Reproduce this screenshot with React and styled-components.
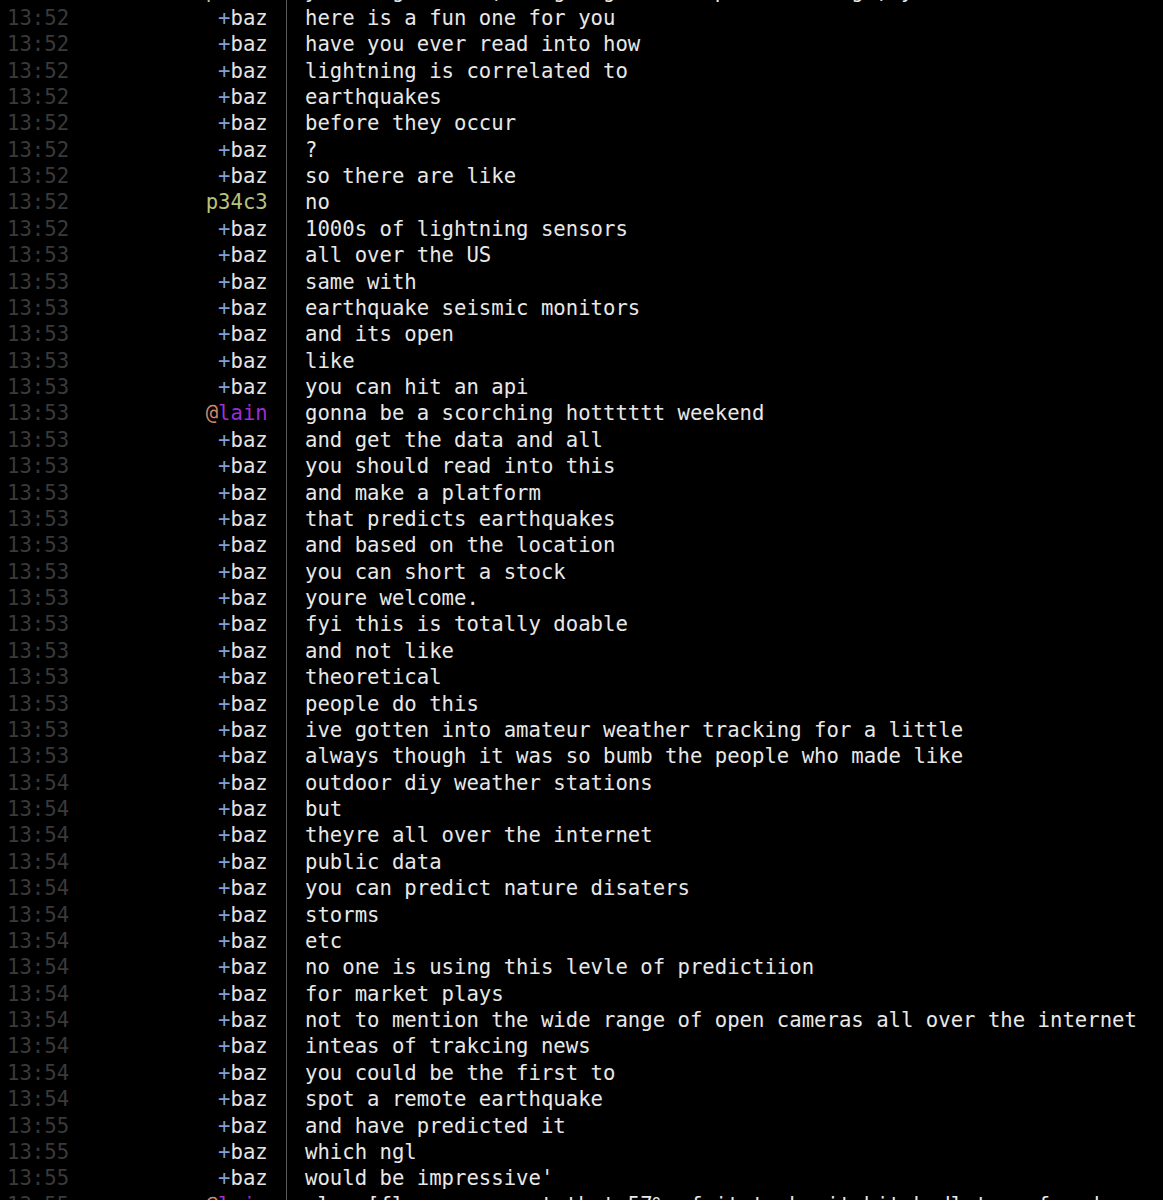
import React from 'react';
import styled, { createGlobalStyle } from 'styled-components';

const GlobalStyle = createGlobalStyle`
  html, body {
    margin: 0;
    padding: 0;
    background: #000;
  }
  body {
    overflow: hidden;
  }
`;

// nick styles: +voice, @op, plain
const NICKS = {
  baz: { prefix: '+', name: 'baz', prefixColor: '#7f9fd6', color: '#e4e4e4' },
  lain: { prefix: '@', name: 'lain', prefixColor: '#d4866e', color: '#9a2fd6' },
  p34c3: { prefix: '', name: 'p34c3', prefixColor: '#b7c27a', color: '#b7c27a' },
};

const LINES = [
  ['13:52', 'p34c3', 'yeah i get that, im going to sleep soon though, you'],
  ['13:52', 'baz', 'here is a fun one for you'],
  ['13:52', 'baz', 'have you ever read into how'],
  ['13:52', 'baz', 'lightning is correlated to'],
  ['13:52', 'baz', 'earthquakes'],
  ['13:52', 'baz', 'before they occur'],
  ['13:52', 'baz', '?'],
  ['13:52', 'baz', 'so there are like'],
  ['13:52', 'p34c3', 'no'],
  ['13:52', 'baz', '1000s of lightning sensors'],
  ['13:53', 'baz', 'all over the US'],
  ['13:53', 'baz', 'same with'],
  ['13:53', 'baz', 'earthquake seismic monitors'],
  ['13:53', 'baz', 'and its open'],
  ['13:53', 'baz', 'like'],
  ['13:53', 'baz', 'you can hit an api'],
  ['13:53', 'lain', 'gonna be a scorching hotttttt weekend'],
  ['13:53', 'baz', 'and get the data and all'],
  ['13:53', 'baz', 'you should read into this'],
  ['13:53', 'baz', 'and make a platform'],
  ['13:53', 'baz', 'that predicts earthquakes'],
  ['13:53', 'baz', 'and based on the location'],
  ['13:53', 'baz', 'you can short a stock'],
  ['13:53', 'baz', 'youre welcome.'],
  ['13:53', 'baz', 'fyi this is totally doable'],
  ['13:53', 'baz', 'and not like'],
  ['13:53', 'baz', 'theoretical'],
  ['13:53', 'baz', 'people do this'],
  ['13:53', 'baz', 'ive gotten into amateur weather tracking for a little'],
  ['13:53', 'baz', 'always though it was so bumb the people who made like'],
  ['13:54', 'baz', 'outdoor diy weather stations'],
  ['13:54', 'baz', 'but'],
  ['13:54', 'baz', 'theyre all over the internet'],
  ['13:54', 'baz', 'public data'],
  ['13:54', 'baz', 'you can predict nature disaters'],
  ['13:54', 'baz', 'storms'],
  ['13:54', 'baz', 'etc'],
  ['13:54', 'baz', 'no one is using this levle of predictiion'],
  ['13:54', 'baz', 'for market plays'],
  ['13:54', 'baz', 'not to mention the wide range of open cameras all over the internet'],
  ['13:54', 'baz', 'inteas of trakcing news'],
  ['13:54', 'baz', 'you could be the first to'],
  ['13:54', 'baz', 'spot a remote earthquake'],
  ['13:55', 'baz', 'and have predicted it'],
  ['13:55', 'baz', 'which ngl'],
  ['13:55', 'baz', "would be impressive'"],
  ['13:55', 'lain', 'also [fl     ou want that 57% of it to be it hit hndl to   found'],
];

const App = () => (
  <>
    <GlobalStyle />
    <Buffer>
      {LINES.map(([time, who, text], i) => {
        const nick = NICKS[who];
        return (
          <Row key={i}>
            <Stamp>{time}</Stamp>
            <Nick>
              {nick.prefix && <Prefix color={nick.prefixColor}>{nick.prefix}</Prefix>}
              <Name color={nick.color}>{nick.name}</Name>
            </Nick>
            <Sep />
            <Message>{text}</Message>
          </Row>
        );
      })}
    </Buffer>
  </>
);

export default App;


const Buffer = styled.div`
  margin-top: -21.6px;
  padding-left: 7px;
  font-family: "DejaVu Sans Mono", "Liberation Mono", monospace;
  font-size: 20.63px;
  line-height: 26.39px;
  color: #e6e6e6;
`;

const Row = styled.div`
  display: flex;
  height: 26.39px;
  white-space: pre;
`;

const Stamp = styled.span`
  width: 5ch;
  color: #3a3a3a;
`;

const Nick = styled.span`
  width: 16ch;
  display: flex;
  justify-content: flex-end;
`;

const Prefix = styled.span`
  color: ${(p) => p.color};
`;

const Name = styled.span`
  color: ${(p) => p.color};
`;

const Sep = styled.span`
  width: 3ch;
  display: flex;
  justify-content: center;

  &::before {
    content: '';
    width: 1px;
    background: #5a5a5a;
  }
`;

const Message = styled.span`
  color: #e8e8e8;
`;
